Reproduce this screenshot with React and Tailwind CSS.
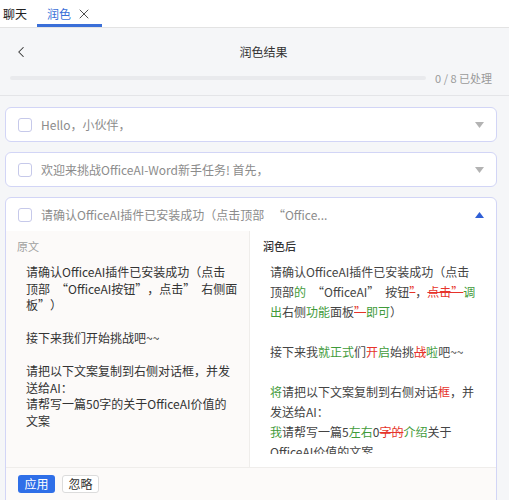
import { ChevronLeft, X } from "lucide-react";

const G = ({ children }) => <span className="text-[#3f9b3a]">{children}</span>;
const R = ({ children }) => <span className="text-[#e6332a] line-through">{children}</span>;
const RN = ({ children }) => <span className="text-[#e6332a]">{children}</span>;
// quote marks drawn full width, as in the reference font
const QL = () => <span className="pl-[6px]">“</span>;
const QR = () => <span className="pr-[6px]">”</span>;

const Checkbox = () => (
  <div className="w-[14px] h-[14px] rounded-[3px] border border-[#c6c9ea] bg-white shrink-0" />
);

const Caret = ({ up }) =>
  up ? (
    <svg width="9" height="6" viewBox="0 0 9 6">
      <path d="M0 6 L4.5 0 L9 6 Z" fill="#2f5fd6" />
    </svg>
  ) : (
    <svg width="9" height="6" viewBox="0 0 9 6">
      <path d="M0 0 L9 0 L4.5 6 Z" fill="#b3b3b3" />
    </svg>
  );

const CardHead = ({ children, up }) => (
  <div className="h-[33px] flex items-center pl-[12px] pr-[12px]">
    <Checkbox />
    <span className="ml-[9px] flex-1 text-[12px] text-[#8c8c8c] whitespace-nowrap overflow-hidden">
      {children}
    </span>
    <Caret up={up} />
  </div>
);

const App = () => {
  return (
    <div className="w-[509px] h-[500px] overflow-hidden bg-[#f5f6f8] font-['Noto_Sans_CJK_SC',sans-serif]">
      {/* tabs */}
      <div className="h-[28px] bg-white border-b border-[#e3e3e3] flex items-stretch">
        <div className="pl-[3px] pr-[10px] flex items-center text-[12px] text-[#222]">聊天</div>
        <div className="px-[10px] flex items-center gap-[5px] border-b-[3px] border-[#3a6fd8] pt-[3px]">
          <span className="text-[12px] text-[#3a6fd8]">润色</span>
          <X size={16} strokeWidth={1.3} className="text-[#333]" />
        </div>
      </div>

      {/* header */}
      <div className="pt-[16px] pb-[11px] border-b border-[#e4e5e8]">
        <div className="h-[16px] flex items-center pl-[12px] pr-[12px]">
          <ChevronLeft size={18} strokeWidth={1.4} className="text-[#333] shrink-0" />
          <div className="flex-1 text-center text-[12px] text-[#333]">润色结果</div>
        </div>
        <div className="mt-[12px] h-[12px] flex items-center pl-[10px] pr-[17px] gap-[9px]">
          <div className="flex-1 h-[4px] rounded-full bg-[#e9eaed]" />
          <span className="text-[11px] text-[#9a9a9a] whitespace-nowrap">0 / 8 已处理</span>
        </div>
      </div>

      {/* list */}
      <div className="pt-[11px] pl-[5px] pr-[12px] flex flex-col gap-[10px]">
        <div className="bg-white border border-[#d2d5f6] rounded-[6px]">
          <CardHead>Hello，小伙伴，</CardHead>
        </div>
        <div className="bg-white border border-[#d2d5f6] rounded-[6px]">
          <CardHead>欢迎来挑战OfficeAI-Word新手任务! 首先，</CardHead>
        </div>
        <div className="bg-white border border-[#d2d5f6] rounded-[6px]">
          <CardHead up>
            请确认OfficeAI插件已安装成功（点击顶部 <QL />Office...
          </CardHead>
          <div className="bg-[#fcfaf9]">
            <div className="grid grid-cols-[244px_1fr] h-[236px]">
              <div className="pl-[11px] pt-[9px] border-r border-[#efedeb]">
                <div className="text-[11px] leading-[12px] text-[#a0a0a0]">原文</div>
                <div className="mt-[12px] ml-[9px] text-[12px] leading-[16.5px] text-[#333] whitespace-nowrap">
                  <div>请确认OfficeAI插件已安装成功（点击</div>
                  <div>
                    顶部<QL />OfficeAI按钮<QR />，点击<QR />右侧面
                  </div>
                  <div>
                    板<QR />）
                  </div>
                  <div className="h-[16.5px]" />
                  <div>接下来我们开始挑战吧~~</div>
                  <div className="h-[16.5px]" />
                  <div>请把以下文案复制到右侧对话框，并发</div>
                  <div>送给AI：</div>
                  <div>请帮写一篇50字的关于OfficeAI价值的</div>
                  <div>文案</div>
                </div>
              </div>
              <div className="bg-white pl-[13px] pt-[9px]">
                <div className="text-[11px] leading-[12px] text-[#333] font-medium">润色后</div>
                <div className="mt-[10px] ml-[7px] h-[192px] overflow-hidden text-[12px] leading-[20px] text-[#444] whitespace-nowrap">
                  <div>请确认OfficeAI插件已安装成功（点击</div>
                  <div>
                    顶部<G>的</G>
                    <QL />OfficeAI<QR />按钮
                    <R>”</R>，<R>点击”</R>
                    <G>调</G>
                  </div>
                  <div>
                    <G>出</G>右侧<G>功能</G>面板<R>”</R>
                    <G>即可</G>）
                  </div>
                  <div className="h-[20px]" />
                  <div>
                    接下来我<G>就正式</G>们<RN>开</RN><G>启</G>始挑<R>战</R><G>啦</G>吧~~
                  </div>
                  <div className="h-[20px]" />
                  <div>
                    <G>将</G>请把以下文案复制到右侧对话<RN>框</RN>，并
                  </div>
                  <div>发送给AI：</div>
                  <div>
                    <G>我</G>请帮写一篇5<G>左右</G>0<R>字的</R><G>介绍</G>关于
                  </div>
                  <div>OfficeAI价值的文案</div>
                </div>
              </div>
            </div>
            <div className="border-t border-[#efedeb] pt-[7px] pb-[20px] pl-[12px] flex gap-[7px]">
              <button className="h-[18px] w-[37px] rounded-[3px] bg-[#2f6fe8] text-white text-[12px] leading-[18px]">
                应用
              </button>
              <button className="h-[18px] w-[37px] rounded-[3px] border border-[#dcdcdc] bg-white text-[#333] text-[12px] leading-[16px]">
                忽略
              </button>
            </div>
          </div>
        </div>
      </div>
    </div>
  );
};

export default App;
